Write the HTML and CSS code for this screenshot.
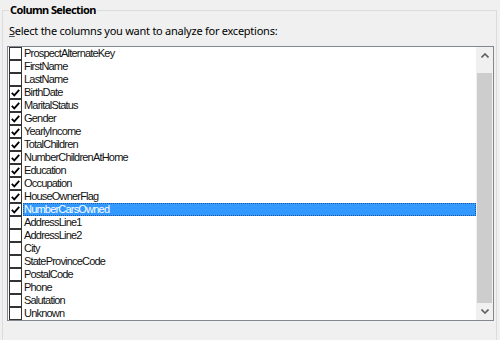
FILE: index.html
```html
<!DOCTYPE html>
<html lang="en">
<head>
    <meta charset="UTF-8">
    <title>Column Selection</title>
    <link rel="stylesheet" href="styles.css">
</head>
<body>

    <div class="group">
        <div class="group-title">Column Selection</div>
        <div class="hint"><u>S</u>elect the columns you want to analyze for exceptions:</div>

        <div class="listbox">
            <div class="items" id="items"></div>
            <div class="scrollbar">
                <div class="sb-btn">
                    <svg width="8" height="5" viewBox="0 0 8 5"><path d="M0.5 4.5 L4 1 L7.5 4.5" fill="none" stroke="#606060" stroke-width="1.6"/></svg>
                </div>
                <div class="sb-track"><div class="sb-thumb"></div></div>
                <div class="sb-btn">
                    <svg width="8" height="5" viewBox="0 0 8 5"><path d="M0.5 0.5 L4 4 L7.5 0.5" fill="none" stroke="#606060" stroke-width="1.6"/></svg>
                </div>
            </div>
        </div>
    </div>

    <script>
        // colunas do modelo e se estão marcadas
        const columns = [
            ['ProspectAlternateKey', false], ['FirstName', false], ['LastName', false],
            ['BirthDate', true], ['MaritalStatus', true], ['Gender', true],
            ['YearlyIncome', true], ['TotalChildren', true], ['NumberChildrenAtHome', true],
            ['Education', true], ['Occupation', true], ['HouseOwnerFlag', true],
            ['NumberCarsOwned', true], ['AddressLine1', false], ['AddressLine2', false],
            ['City', false], ['StateProvinceCode', false], ['PostalCode', false],
            ['Phone', false], ['Salutation', false], ['Unknown', false]
        ];
        const selected = 'NumberCarsOwned';
        const check = '<svg width="9" height="8" viewBox="0 0 9 8"><path d="M0.8 3.8 L3.3 6.4 L8.2 0.8" fill="none" stroke="#000" stroke-width="1.8"/></svg>';

        const list = document.getElementById('items');
        columns.forEach(([name, on]) => {
            const row = document.createElement('div');
            row.className = 'row';
            row.innerHTML = `
                <span class="box">${on ? check : ''}</span>
                <span class="name${name === selected ? ' selected' : ''}">${name}</span>
            `;
            list.appendChild(row);
        });
    </script>

</body>
</html>
```

FILE: styles.css
```css
body {
    margin: 0;
    background-color: #f0f0f0;
    font-family: "Noto Sans", "Liberation Sans", sans-serif;
    color: #000;
    overflow: hidden;
}
.group {
    margin: 10px 3px 0 2px;
    height: 329px;
    border: 1px solid #dcdcdc;
    border-bottom: none;
    padding: 0 2px 0 4px;
}
.group-title {
    width: fit-content;
    height: 16px;
    line-height: 16px;
    margin: -9px 0 0 2px;
    padding: 0 1px;
    background-color: #f0f0f0;
    font-size: 11px;
    font-weight: bold;
    letter-spacing: -0.6px;
}
.hint {
    margin: 5px 0 0 2px;
    height: 15px;
    line-height: 15px;
    font-size: 11px;
    letter-spacing: -0.25px;
}
.hint u {
    text-decoration-color: #555;
}
.listbox {
    margin-top: 8px;
    height: 275px;
    box-sizing: border-box;
    border: 1px solid #828790;
    background-color: #fff;
    display: flex;
}
.items {
    flex: 1;
}
.row {
    display: flex;
    align-items: center;
    height: 13px;
    font-family: "Liberation Sans", Arial, sans-serif;
    font-size: 11px;
    letter-spacing: -0.8px;
    color: #111;
}
.box {
    width: 11px;
    height: 11px;
    margin-left: 1px;
    border: 1px solid #333;
    background-color: #fff;
    display: flex;
    align-items: center;
    justify-content: center;
}
.name {
    flex: 1;
    height: 13px;
    line-height: 13px;
    margin-left: 1px;
    padding-left: 1px;
    box-sizing: border-box;
}
.name.selected {
    background-color: #3399ff;
    color: #fff;
    outline: 1px dotted #1c5aa0;
    outline-offset: -1px;
}
.scrollbar {
    width: 17px;
    background-color: #f0f0f0;
    display: flex;
    flex-direction: column;
}
.sb-btn {
    height: 17px;
    display: flex;
    align-items: center;
    justify-content: center;
}
.sb-track {
    flex: 1;
    display: flex;
    flex-direction: column;
    justify-content: flex-end;
}
.sb-thumb {
    height: 230px;
    margin: 0 1px;
    background-color: #cdcdcd;
}
```
